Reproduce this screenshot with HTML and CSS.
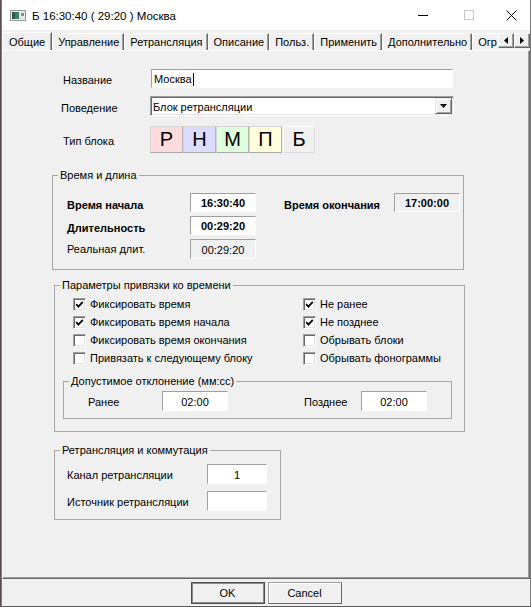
FILE: index.html
```html
<!DOCTYPE html>
<html lang="ru">
<head>
<meta charset="utf-8">
<title>Б 16:30:40 ( 29:20 ) Москва</title>
<link rel="stylesheet" href="styles.css">
</head>
<body>
<div class="window">
  <header class="titlebar">
    <svg class="app-icon" width="16" height="11" viewBox="0 0 16 11">
      <rect x="0.5" y="0.5" width="15" height="10" fill="#e6e6e6" stroke="#9a9a9a"/>
      <rect x="2" y="2" width="7" height="7" fill="#3d7f6e"/>
      <rect x="2" y="2" width="3" height="7" fill="#2a5e50"/>
      <rect x="11" y="3" width="3" height="3" fill="#8a8a8a"/>
    </svg>
    <span class="title">Б 16:30:40 ( 29:20 ) Москва</span>
    <div class="controls">
      <span class="ctl"><svg width="10" height="1" viewBox="0 0 10 1"><rect width="10" height="1" fill="#000"/></svg></span>
      <span class="ctl"><svg width="10" height="10" viewBox="0 0 10 10"><rect x="0.5" y="0.5" width="9" height="9" fill="none" stroke="#c8c8c8"/></svg></span>
      <span class="ctl ctl-close"><svg width="11" height="11" viewBox="0 0 11 11"><path d="M0.5 0.5L10.5 10.5M10.5 0.5L0.5 10.5" stroke="#000" stroke-width="1" fill="none"/></svg></span>
    </div>
  </header>

  <nav class="tabstrip">
    <div class="tablist">
      <span class="tab active">Общие</span>
      <span class="tab">Управление</span>
      <span class="tab">Ретрансляция</span>
      <span class="tab">Описание</span>
      <span class="tab">Польз.</span>
      <span class="tab">Применить</span>
      <span class="tab">Дополнительно</span>
      <span class="tab tab-last">Огр</span>
    </div>
    <div class="tabscroll">
      <span class="sbtn"><svg width="4" height="7" viewBox="0 0 4 7"><path d="M4 0L0 3.5L4 7Z" fill="#000"/></svg></span>
      <span class="sbtn"><svg width="4" height="7" viewBox="0 0 4 7"><path d="M0 0L4 3.5L0 7Z" fill="#000"/></svg></span>
    </div>
  </nav>

  <main class="panel">
    <div class="topform">
      <div class="frow r-name">
        <span class="flabel">Название</span>
        <div class="edit name-edit"><span>Москва</span><span class="caret"></span></div>
      </div>
      <div class="frow r-beh">
        <span class="flabel l-beh">Поведение</span>
        <div class="combo">
          <span class="combo-text">Блок ретрансляции</span>
          <span class="combo-btn"><svg width="7" height="4" viewBox="0 0 7 4"><path d="M0 0H7L3.5 4Z" fill="#000"/></svg></span>
        </div>
      </div>
      <div class="frow r-type">
        <span class="flabel">Тип блока</span>
        <div class="typebtns">
          <span class="tb tb-r">Р</span>
          <span class="tb tb-n">Н</span>
          <span class="tb tb-m">М</span>
          <span class="tb tb-p">П</span>
          <span class="tb tb-b">Б</span>
        </div>
      </div>
    </div>

    <fieldset class="group g-time">
      <legend>Время и длина</legend>
      <div class="time-grid">
        <span class="tlabel bold c1 lo">Время начала</span>
        <span class="edit tval bold c2">16:30:40</span>
        <span class="tlabel bold c4 lo">Время окончания</span>
        <span class="ro tval bold c5">17:00:00</span>
        <span class="tlabel bold c1 lo">Длительность</span>
        <span class="edit tval bold c2">00:29:20</span>
        <span class="tlabel c1">Реальная длит.</span>
        <span class="ro tval c2">00:29:20</span>
      </div>
    </fieldset>

    <fieldset class="group g-bind">
      <legend>Параметры привязки ко времени</legend>
      <div class="checks">
        <span class="chk"><span class="box"><svg width="9" height="9" viewBox="0 0 9 9"><path d="M1.2 4.2L3.4 6.6L7.8 1.8" stroke="#000" stroke-width="1.8" fill="none"/></svg></span>Фиксировать время</span>
        <span class="chk"><span class="box"><svg width="9" height="9" viewBox="0 0 9 9"><path d="M1.2 4.2L3.4 6.6L7.8 1.8" stroke="#000" stroke-width="1.8" fill="none"/></svg></span>Не ранее</span>
        <span class="chk"><span class="box"><svg width="9" height="9" viewBox="0 0 9 9"><path d="M1.2 4.2L3.4 6.6L7.8 1.8" stroke="#000" stroke-width="1.8" fill="none"/></svg></span>Фиксировать время начала</span>
        <span class="chk"><span class="box"><svg width="9" height="9" viewBox="0 0 9 9"><path d="M1.2 4.2L3.4 6.6L7.8 1.8" stroke="#000" stroke-width="1.8" fill="none"/></svg></span>Не позднее</span>
        <span class="chk"><span class="box"></span>Фиксировать время окончания</span>
        <span class="chk"><span class="box"></span>Обрывать блоки</span>
        <span class="chk"><span class="box"></span>Привязать к следующему блоку</span>
        <span class="chk"><span class="box"></span>Обрывать фонограммы</span>
      </div>
      <fieldset class="group sub">
        <legend>Допустимое отклонение (мм:сс)</legend>
        <div class="dev-grid">
          <span class="dlabel c1">Ранее</span>
          <span class="edit tval c2">02:00</span>
          <span class="dlabel c4">Позднее</span>
          <span class="edit tval c5">02:00</span>
        </div>
      </fieldset>
    </fieldset>

    <fieldset class="group g-retr">
      <legend>Ретрансляция и коммутация</legend>
      <div class="retr-grid">
        <span class="dlabel">Канал ретрансляции</span>
        <span class="edit tval">1</span>
        <span class="dlabel">Источник ретрансляции</span>
        <span class="edit tval"></span>
      </div>
    </fieldset>
  </main>

  <footer class="footer">
    <span class="btn btn-default">OK</span>
    <span class="btn">Cancel</span>
  </footer>
</div>
</body>
</html>
```

FILE: styles.css
```css
* { box-sizing: border-box; }
html, body { margin: 0; padding: 0; }
body {
  width: 531px;
  height: 607px;
  overflow: hidden;
  background: #5a5050;
  font-family: "Liberation Sans", Arial, sans-serif;
  font-size: 11px;
  color: #000;
}
.window {
  margin-left: 1px;
  width: 530px;
  height: 607px;
  display: flex;
  flex-direction: column;
  background: #f0f0f0;
  border-left: 1px solid #7c7c7c;
  border-right: 1px solid #7c7c7c;
  border-bottom: 1px solid #5c5c5c;
}

/* title bar */
.titlebar {
  flex: none;
  height: 30px;
  background: #fff;
  display: flex;
  align-items: center;
}
.app-icon { margin-left: 8px; flex: none; }
.title { margin-left: 6px; font-size: 11.5px; padding-top: 1px; }
.controls { margin-left: auto; display: flex; height: 30px; }
.ctl {
  width: 46px;
  display: flex;
  align-items: center;
  justify-content: center;
}
.ctl-close { width: 38px; }

/* tabs */
.tabstrip {
  flex: none;
  height: 20px;
  display: flex;
  align-items: flex-end;
}
.tablist {
  width: 496px;
  height: 20px;
  display: flex;
  align-items: flex-end;
  overflow: hidden;
}
.tab {
  flex: none;
  height: 17px;
  padding: 0 4px 0 5px;
  display: flex;
  align-items: center;
  white-space: nowrap;
  border-top: 1px solid #fff;
  border-left: 1px solid #fff;
  border-right: 1px solid #696969;
  box-shadow: inset -1px 0 0 #a0a0a0;
}
.tab.active {
  position: relative;
  z-index: 1;
  height: 19px;
  margin-bottom: -1px;
  padding: 0 6px 1px;
  background: #f0f0f0;
}
.tab.tab-last {
  flex: 1;
  border-right: none;
  box-shadow: none;
}
.tabscroll {
  display: flex;
  align-self: flex-start;
  margin-top: 3px;
}
.sbtn {
  width: 16px;
  height: 15px;
  display: flex;
  align-items: center;
  justify-content: center;
  background: #f0f0f0;
  border-top: 1px solid #fff;
  border-left: 1px solid #fff;
  border-right: 1px solid #696969;
  border-bottom: 1px solid #696969;
  box-shadow: inset -1px -1px 0 #a0a0a0;
}

/* panel */
.panel {
  flex: none;
  height: 529px;
  border-top: 1px solid #fff;
  border-left: 1px solid #fff;
  border-right: 1px solid #696969;
  border-bottom: 1px solid #696969;
  box-shadow: inset -1px -1px 0 #a0a0a0;
  display: flex;
  flex-direction: column;
  align-items: flex-start;
}

.edit {
  background: #fff;
  border: 1px solid;
  border-color: #a0a0a0 #fff #fff #a0a0a0;
}
.ro {
  background: #f0f0f0;
  border: 1px solid;
  border-color: #a0a0a0 #fff #fff #a0a0a0;
}
.tval {
  display: flex;
  align-items: center;
  justify-content: center;
  padding-top: 1px;
}
.bold { font-weight: bold; }

/* top form */
.topform { margin: 18px 0 0 58px; }
.frow { display: flex; align-items: center; }
.flabel { width: 89px; padding-left: 2px; padding-top: 3px; }
.flabel.l-beh { padding-left: 0; }
.r-beh { margin-top: 8px; }
.r-type { margin-top: 10px; }
.name-edit {
  margin-left: 1px;
  width: 302px;
  height: 19px;
  display: flex;
  align-items: center;
  padding-left: 2px;
  padding-top: 1px;
}
.caret {
  display: inline-block;
  width: 1px;
  height: 13px;
  background: #000;
  margin-left: 1px;
}
.combo {
  width: 304px;
  height: 20px;
  display: flex;
  align-items: center;
  background: #fff;
  border: 1px solid;
  border-color: #a0a0a0 #fff #fff #a0a0a0;
  box-shadow: inset 1px 1px 0 #696969, inset -1px -1px 0 #e3e3e3;
}
.combo-text { padding-left: 2px; padding-top: 1px; }
.combo-btn {
  margin-left: auto;
  margin-right: 1px;
  width: 17px;
  height: 16px;
  display: flex;
  align-items: center;
  justify-content: center;
  background: #f0f0f0;
  border-top: 1px solid #e3e3e3;
  border-left: 1px solid #e3e3e3;
  border-right: 1px solid #696969;
  border-bottom: 1px solid #696969;
  box-shadow: inset 1px 1px 0 #fff, inset -1px -1px 0 #a0a0a0;
}
.typebtns { display: flex; }
.tb {
  width: 33px;
  height: 27px;
  display: flex;
  align-items: center;
  justify-content: center;
  font-size: 20px;
  border: 1px solid;
  border-color: #d4d4d4 #b4b4b4 #a8a8a8 #d4d4d4;
}
.tb-r { background: #ffdcdc; }
.tb-n { background: #dcdcff; }
.tb-m { background: #dcffdc; }
.tb-p { background: #ffffdc; }
.tb-b {
  margin-left: 1px;
  width: 32px;
  background: #f0f0f0;
  border-color: #fff #dcdcdc #dcdcdc #fff;
}

/* groups */
.group {
  margin: 0;
  padding: 0;
  min-width: 0;
  border: 1px solid #a6a6a6;
}
.group legend {
  margin-left: 5px;
  padding: 0 2px;
  line-height: 14px;
}
.g-time { margin: 15px 0 0 49px; width: 412px; }
.time-grid {
  margin: 11px 0 10px 14px;
  display: grid;
  grid-template-columns: 123px 66px 28px 110px 66px;
  grid-template-rows: 19px 19px 20px;
  row-gap: 4px;
}
.c1 { grid-column: 1; }
.c2 { grid-column: 2; }
.c4 { grid-column: 4; }
.c5 { grid-column: 5; }
.tlabel { align-self: center; }
.tlabel.lo { padding-top: 4px; }

.g-bind { margin: 8px 0 0 51px; width: 411px; }
.checks {
  margin: 3px 0 0 18px;
  display: grid;
  grid-template-columns: 230px auto;
  grid-auto-rows: 18px;
}
.chk { display: flex; align-items: center; white-space: nowrap; }
.box {
  flex: none;
  width: 13px;
  height: 13px;
  margin-right: 4px;
  display: flex;
  align-items: center;
  justify-content: center;
  background: #fff;
  border: 1px solid;
  border-color: #a0a0a0 #fff #fff #a0a0a0;
  box-shadow: inset 1px 1px 0 #696969, inset -1px -1px 0 #e3e3e3;
}
.sub { margin: 7px 0 12px 8px; width: 389px; }
.dev-grid {
  margin: 3px 0 7px 24px;
  display: grid;
  grid-template-columns: 74px 66px 76px 57px 66px;
  grid-template-rows: 20px;
}
.dlabel { align-self: center; padding-top: 2px; }

.g-retr { margin: 11px 0 0 51px; width: 227px; }
.retr-grid {
  margin: 7px 0 8px 12px;
  display: grid;
  grid-template-columns: 140px 60px;
  grid-template-rows: 20px 20px;
  row-gap: 7px;
}

/* footer */
.footer {
  flex: 1;
  display: flex;
  justify-content: center;
  align-items: flex-start;
  padding-top: 3px;
  gap: 3px;
}
.btn {
  width: 74px;
  height: 22px;
  display: flex;
  align-items: center;
  justify-content: center;
  background: #f0f0f0;
  border: 1px solid;
  border-color: #a0a0a0 #696969 #696969 #a0a0a0;
  box-shadow: inset 1px 1px 0 #fff;
}
.btn-default {
  border: 1px solid #4f4f4f;
  box-shadow: inset 0 0 0 1px #8c8c8c;
}
```
